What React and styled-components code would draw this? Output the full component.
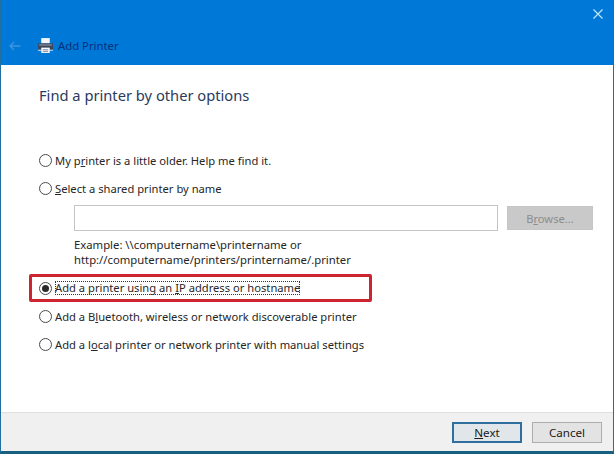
import React from "react";
import styled, { createGlobalStyle } from "styled-components";

const Global = createGlobalStyle`
  html, body { margin: 0; padding: 0; background: #fff; }
  body { font-family: "Noto Sans", "Open Sans", sans-serif; }
  * { box-sizing: border-box; }
`;

const Win = styled.div`
  width: 614px; height: 454px; display: flex; flex-direction: column;
  background: #fff; overflow: hidden;
  border-left: 1px solid #1f6f9f; border-right: 1px solid #1f6f9f; border-bottom: 3px solid #17607f;
`;
const TitleBar = styled.header`
  height: 65px; flex: none; background: #0078d7; display: flex; flex-direction: column;
  margin: 0 -1px;
`;
const CloseRow = styled.div`
  height: 30px; display: flex; justify-content: flex-end; align-items: flex-start;
  padding: 9px 11px 0 0;
`;
const NavRow = styled.div`
  display: flex; align-items: center; height: 31px; padding: 0 0 0 9px;
`;
const AppIcon = styled.svg`margin-left: 16px; flex: none;`;
const Title = styled.span`
  margin-left: 4px; font-size: 11.3px; color: #06307c;
`;
const Body = styled.main`
  flex: 1; display: flex; flex-direction: column; padding: 20px 0 0 38px; min-height: 0;
`;
const Heading = styled.h1`
  margin: 0; font-size: 14.7px; line-height: 20px; font-weight: 400; color: #2b3a5c;
`;
const Options = styled.div`
  margin-top: 46px; display: flex; flex-direction: column;
`;
const Row = styled.div`
  position: relative; display: flex; align-items: center; height: 18px;
  margin-top: ${p => p.$gap ?? 10}px; font-size: 11.2px; color: #262626; white-space: nowrap;
`;
const Radio = styled.span`
  width: 13px; height: 13px; flex: none; border-radius: 50%; border: 1px solid #4a4a4a;
  background: #fff; margin-right: 3px; display: flex; align-items: center; justify-content: center;
  &::after {
    content: ""; width: 7px; height: 7px; border-radius: 50%;
    background: ${p => (p.$checked ? "#2a2a2a" : "transparent")};
  }
`;
const Focus = styled.span`outline: 1px dotted #333; outline-offset: -1px; line-height: 14px;`;
const Key = styled.span`text-decoration: underline; text-underline-offset: 1px;`;
const Highlight = styled.span`
  position: absolute; left: -10px; top: -5px; width: 343px; height: 28px;
  border: 3px solid #cc2430; border-radius: 2px; pointer-events: none;
`;
const Indented = styled.div`
  display: flex; flex-direction: column; padding-left: 35px; margin-top: 8px;
`;
const InputRow = styled.div`display: flex; align-items: center; gap: 9px;`;
const Input = styled.div`
  width: 424px; height: 26px; border: 1px solid #c4c4c4; background: #fff;
`;
const Browse = styled.button`
  width: 86px; height: 24px; border: 1px solid #c6c6c6; background: #c9c9c9; color: #8c8c8c;
  font: inherit; font-size: 11.2px; padding: 0;
`;
const Example = styled.p`
  margin: 7px 0 0; font-size: 11.3px; line-height: 14.5px; color: #262626; white-space: nowrap;
`;
const Footer = styled.footer`
  height: 39px; flex: none; background: #f0f0f0; border-top: 1px solid #dfdfdf;
  display: flex; justify-content: flex-end; align-items: flex-start; gap: 10px;
  padding: 9px 11px 0 0;
`;
const Btn = styled.button`
  width: 70px; height: 21px; padding: 0; font: inherit; font-size: 11.6px; color: #1a1a1a;
  background: ${p => (p.$primary ? "#e1e6ea" : "#e3e3e3")};
  border: ${p => (p.$primary ? "2px solid #2f6f9f" : "1px solid #adadad")};
`;

export default function App() {
  return (
    <Win>
      <Global />
      <TitleBar>
        <CloseRow>
          <svg width="10" height="10" viewBox="0 0 10 10" fill="none" stroke="#bfe6fb" strokeWidth="1.2">
            <path d="M.5.5l9 9M9.5.5l-9 9" />
          </svg>
        </CloseRow>
        <NavRow>
          <svg width="12" height="10" viewBox="0 0 12 10" fill="none" stroke="#3f95dd" strokeWidth="1.3">
            <path d="M11.5 5H1M5 1L1 5l4 4" />
          </svg>
          <AppIcon width="17" height="17" viewBox="0 0 16 16">
            <path d="M4 1h8v5H4z" fill="#f4f6f8" />
            <path d="M1 6h14v6H1z" fill="#3d4658" />
            <path d="M2 6.5h12v2H2z" fill="#6a7488" />
            <path d="M4 10h8v5H4z" fill="#f8f9fa" />
            <path d="M5.5 12h5M5.5 13.5h5" stroke="#6b7a8c" strokeWidth=".8" />
            <path d="M1 12h3v1H1zM12 12h3v1h-3z" fill="#cfe3f5" />
          </AppIcon>
          <Title>Add Printer</Title>
        </NavRow>
      </TitleBar>
      <Body>
        <Heading>Find a printer by other options</Heading>
        <Options>
          <Row $gap={0}><Radio />My p<Key>r</Key>inter is a little older. Help me find it.</Row>
          <Row><Radio /><Key>S</Key>elect a shared printer by name</Row>
          <Indented>
            <InputRow>
              <Input />
              <Browse disabled>B<Key>r</Key>owse...</Browse>
            </InputRow>
            <Example>
              Example: \\computername\printername or<br />
              http://computername/printers/printername/.printer
            </Example>
          </Indented>
          <Row $gap={12}>
            <Radio $checked />
            <Focus>Add a printer using an <Key>I</Key>P address or hostname</Focus>
            <Highlight />
          </Row>
          <Row><Radio />Add a B<Key>l</Key>uetooth, wireless or network discoverable printer</Row>
          <Row><Radio />Add a l<Key>o</Key>cal printer or network printer with manual settings</Row>
        </Options>
      </Body>
      <Footer>
        <Btn $primary><Key>N</Key>ext</Btn>
        <Btn>Cancel</Btn>
      </Footer>
    </Win>
  );
}
